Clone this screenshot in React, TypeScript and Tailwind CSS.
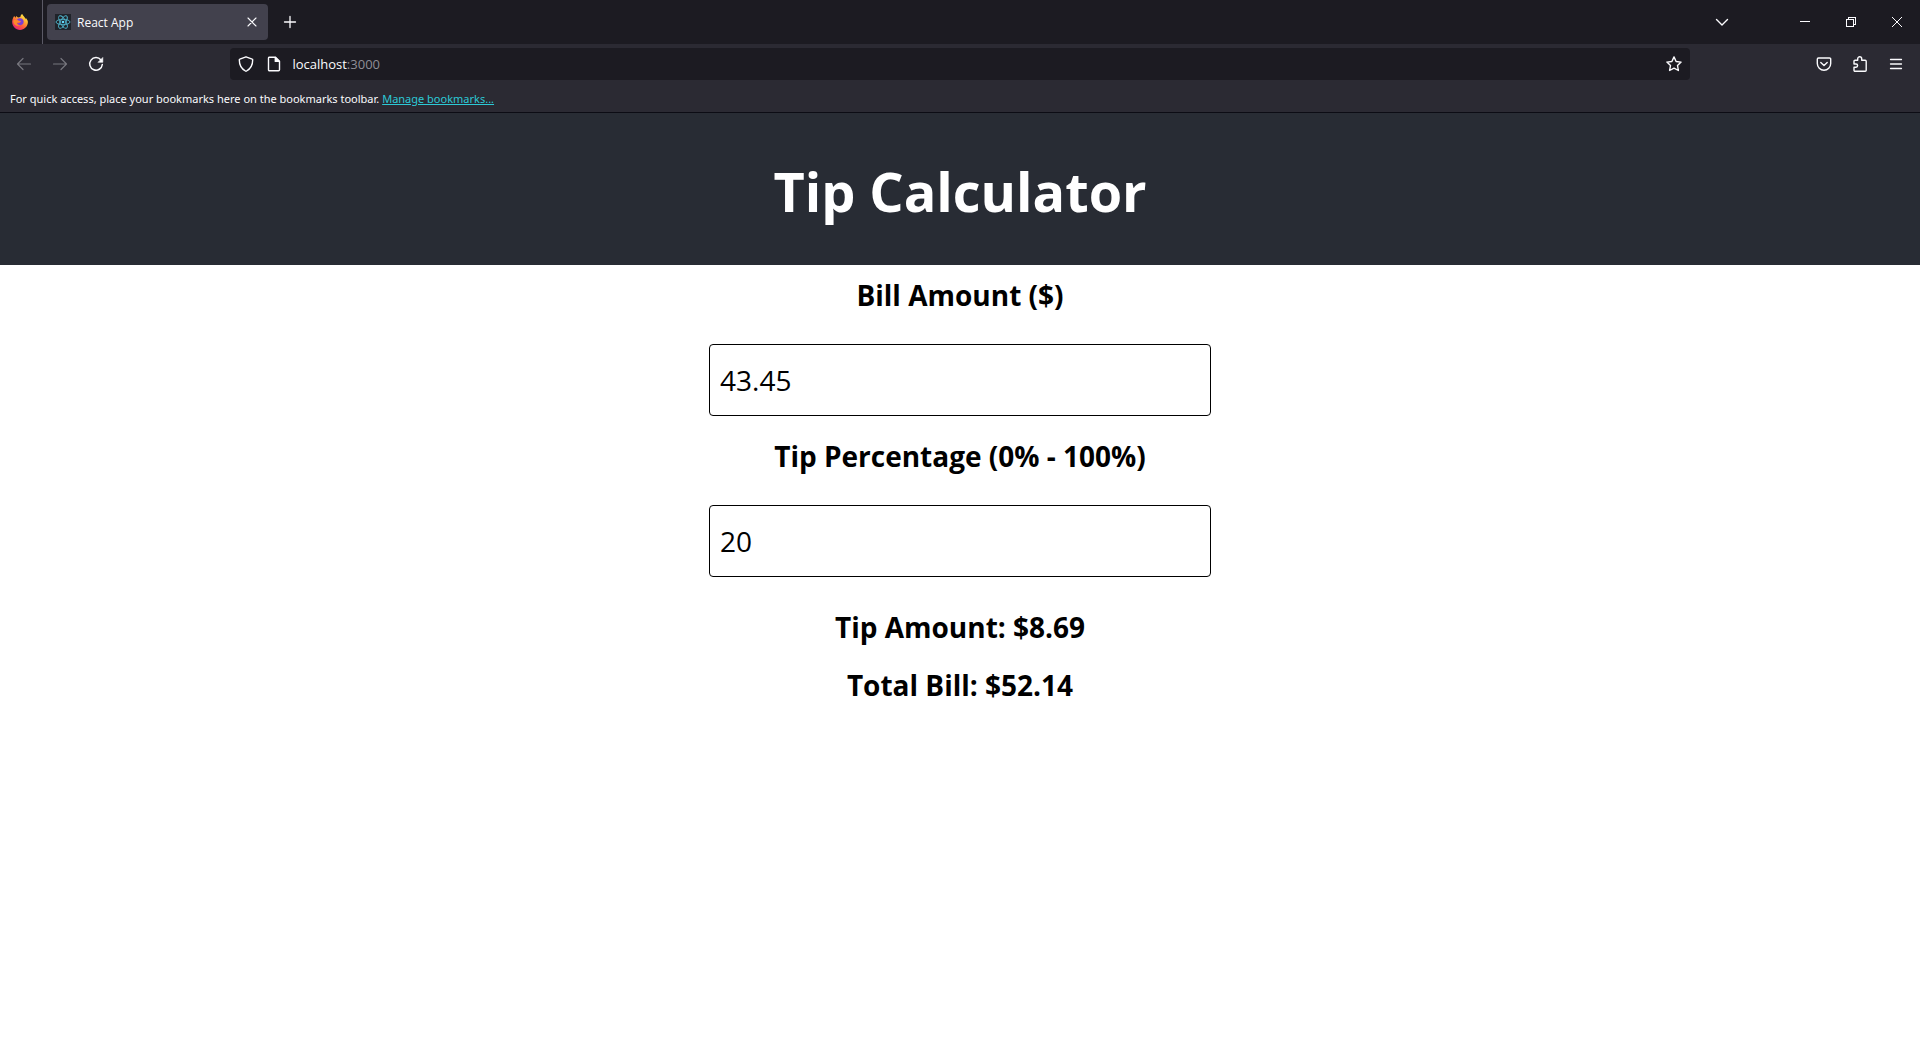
import { useState, type ReactNode } from "react";

function IconButton({ label, className, children, disabled }: { label: string; className: string; children: ReactNode; disabled?: boolean }) {
  return (
    <button type="button" aria-label={label} disabled={disabled} className={`flex shrink-0 items-center justify-center ${className}`}>
      {children}
    </button>
  );
}

function Icon({ children, width = 1.4, className = "size-4" }: { children: ReactNode; width?: number; className?: string }) {
  return (
    <svg viewBox="0 0 16 16" className={className} fill="none" stroke="currentColor" strokeWidth={width} strokeLinecap="round" strokeLinejoin="round" aria-hidden="true">
      {children}
    </svg>
  );
}

function FirefoxLogo() {
  return (
    <svg viewBox="0 0 16 16" className="size-4" aria-hidden="true">
      <defs>
        <linearGradient id="flame" x1="0.85" y1="0.05" x2="0.2" y2="0.95">
          <stop offset="0" stopColor="#fff44f" />
          <stop offset="0.35" stopColor="#ffa930" />
          <stop offset="0.65" stopColor="#ff5a3c" />
          <stop offset="1" stopColor="#e8207c" />
        </linearGradient>
      </defs>
      <path d="M15.3 6.1c-.4-.9-1-1.600-1.700-2 .3.600.5 1.200.5 1.500C13 3 10.900 2 10.200 0 9 .7 8.500 1.900 8.400 2.900c-.8.100-1.500.3-2.100.6C5.500 3.200 5 2.800 4.700 1.900 4 2.300 3.600 3 3.500 3.700 2.900 3.300 2.500 2.600 2.300 2.100 1.100 3.300.4 5.500.2 7.400c-.4 4.600 3.200 8.500 7.800 8.500 4.300 0 7.900-3.500 7.900-7.900 0-.7-.2-1.300-.6-1.900z" fill="url(#flame)" />
      <path d="M5 5.200c1.200-1 3-1.200 4.500-.6 1.800.8 2.700 2.900 1.900 4.700-.7 1.500-2.500 2.200-4.200 1.700-1.200-.4-2-1.200-2.200-2.200 1 .7 2.200.4 2.900-.2.600-.5 1-.8.900-1.200-.2-.5-1.300-.4-1.900-.6-.7-.2-1.500-.8-1.900-1.600z" fill="#7b3fd4" />
      <path d="M1.500 6.300c1-.5 2.300-.4 3.200 0 .8.400 1.500.8 2.600 1-.2.900-1.700 1-2.300 1.600.2 1.500 1.700 2.400 3.200 2.300-2.200 1.200-5.300.4-6.300-1.800-.5-1-.7-2.100-.4-3.100z" fill="#ff8a2a" />
    </svg>
  );
}

function ReactFavicon() {
  return (
    <svg viewBox="0 0 16 16" className="size-4 shrink-0" aria-hidden="true">
      <rect width="16" height="16" fill="#20232a" />
      <g fill="none" stroke="#4fb4cc" strokeWidth="0.9">
        <ellipse cx="8" cy="8" rx="7" ry="2.700" />
        <ellipse cx="8" cy="8" rx="7" ry="2.700" transform="rotate(60 8 8)" />
        <ellipse cx="8" cy="8" rx="7" ry="2.700" transform="rotate(120 8 8)" />
      </g>
      <circle cx="8" cy="8" r="1.300" fill="#61dafb" />
    </svg>
  );
}

function TabStrip() {
  return (
    <div className="flex h-11 items-center bg-[#1c1b22]">
      <div className="flex h-11 w-[43px] shrink-0 items-center border-r border-[#5b5a66] pl-3">
        <FirefoxLogo />
      </div>
      <div className="ml-1 flex h-9 w-[221px] items-center rounded bg-[#42414d] pr-2 pl-2">
        <ReactFavicon />
        <span className="ml-1.5 flex-1 pt-0.5 text-xs">React App</span>
        <IconButton label="Close tab" className="size-4">
          <Icon width={1.1}><path d="M4 4l8 8M12 4l-8 8" /></Icon>
        </IconButton>
      </div>
      <IconButton label="New tab" className="ml-1 size-9">
        <Icon width={1.3}><path d="M8 2.500v11M2.500 8h11" /></Icon>
      </IconButton>
      <div className="flex-1" />
      <IconButton label="List all tabs" className="mr-[42px] size-9">
        <Icon><path d="M2.500 5.500L8 11l5.500-5.500" /></Icon>
      </IconButton>
      <IconButton label="Minimize" className="h-11 w-[46px]">
        <svg viewBox="0 0 10 10" className="size-2.5" fill="none" stroke="currentColor" shapeRendering="crispEdges"><path d="M0 4.500h10" /></svg>
      </IconButton>
      <IconButton label="Restore" className="h-11 w-[46px]">
        <svg viewBox="0 0 10 10" className="size-2.5" fill="none" stroke="currentColor" shapeRendering="crispEdges"><path d="M.5 2.500h7v7h-7zM2.500 2.500v-2h7v7h-2" /></svg>
      </IconButton>
      <IconButton label="Close window" className="h-11 w-[46px]">
        <svg viewBox="0 0 10 10" className="size-2.5" fill="none" stroke="currentColor"><path d="M0 0l10 10M10 0L0 10" /></svg>
      </IconButton>
    </div>
  );
}

function NavigationBar() {
  return (
    <div className="flex h-10 items-center px-1.5">
      <IconButton label="Back" className="size-9 text-[#77767e]" disabled>
        <Icon width={1.2}><path d="M14.500 8h-13M7 2.500L1.500 8 7 13.500" /></Icon>
      </IconButton>
      <IconButton label="Forward" className="size-9 text-[#77767e]" disabled>
        <Icon width={1.2}><path d="M1.500 8h13M9 2.500L14.500 8 9 13.500" /></Icon>
      </IconButton>
      <IconButton label="Reload" className="size-9">
        <Icon width={1.500}>
          <path d="M13 4A6.300 6.300 0 1 0 14.300 8.500" />
          <path d="M14.800 1.800v4.500h-4.500z" fill="currentColor" strokeWidth="0.6" />
        </Icon>
      </IconButton>
      <div className="flex-1" />
      <div className="flex h-8 flex-[12.4] items-center rounded bg-[#1c1b22] px-2">
        <IconButton label="Tracking protection" className="size-4">
          <Icon><path d="M8 .8l6.200 2.400c.300 0 .500.300.500.600 0 5.200-1.900 8.900-6.100 11.200a1.200 1.200 0 0 1-1.200 0C3.200 12.700 1.300 9 1.300 3.800c0-.3.200-.6.500-.6z" /></Icon>
        </IconButton>
        <IconButton label="Site information" className="ml-3 size-4">
          <Icon>
            <path d="M3.200 1.200h6.300l4 4v8.600a1 1 0 0 1-1 1H3.500a1 1 0 0 1-1-1V2.200a1 1 0 0 1 .7-1z" />
            <path d="M9.300 1.500v3.900h4z" fill="currentColor" />
          </Icon>
        </IconButton>
        <p className="ml-2.5 flex-1 pt-0.5 text-[13px]">localhost<span className="text-[#8f8e96]">:3000</span></p>
        <IconButton label="Bookmark this page" className="size-4">
          <Icon><path d="M8 .9l2.100 4.600 5 .6-3.600 3.400.9 5-4.400-2.400-4.400 2.400.9-5L.9 6.100l5-.6z" /></Icon>
        </IconButton>
      </div>
      <div className="flex-1" />
      <IconButton label="Save to Pocket" className="size-9">
        <Icon>
          <path d="M2.500 2h11a1.200 1.200 0 0 1 1.200 1.200V7.500a6.700 6.700 0 0 1-13.400 0V3.200A1.200 1.200 0 0 1 2.500 2z" />
          <path d="M4.800 6.500L8 9.500l3.200-3" />
        </Icon>
      </IconButton>
      <IconButton label="Extensions" className="size-9">
        <Icon><path d="M5.700 4.200V2.800a2 2 0 0 1 4 0v1.400h3.500a1 1 0 0 1 1 1v9a1 1 0 0 1-1 1H3a1 1 0 0 1-1-1v-3h2a1.600 1.600 0 0 0 0-3.200H2v-2.800a1 1 0 0 1 1-1z" /></Icon>
      </IconButton>
      <IconButton label="Open application menu" className="size-9">
        <Icon width={1.300}><path d="M2.500 3.500h11M2.500 8h11M2.500 12.500h11" /></Icon>
      </IconButton>
    </div>
  );
}

function BookmarksBar() {
  return (
    <p className="h-7 px-2.5 pt-[7px] font-['Noto_Sans',sans-serif] text-[11px] leading-4">
      For quick access, place your bookmarks here on the bookmarks toolbar.{" "}
      <a href="#bookmarks" className="text-[#2cc9d6] underline">Manage bookmarks...</a>
    </p>
  );
}

function AmountField({ id, label, value, onChange }: { id: string; label: string; value: string; onChange: (value: string) => void }) {
  return (
    <div className="flex w-full flex-col items-center pt-2.5">
      <label htmlFor={id} className="text-[28px] leading-10 font-bold">{label}</label>
      <input
        id={id}
        type="text"
        inputMode="decimal"
        value={value}
        onChange={(event) => onChange(event.target.value)}
        className="mt-[29px] mb-2.5 h-[72px] w-full rounded border border-black px-2.5 text-[28px]"
      />
    </div>
  );
}

export default function App() {
  const [bill, setBill] = useState("43.45");
  const [percentage, setPercentage] = useState("20");
  const amount = Number(bill) || 0;
  const tip = (amount * (Number(percentage) || 0)) / 100;

  return (
    <div className="min-h-screen bg-white font-['Open_Sans','Noto_Sans',sans-serif]">
      <div className="border-b border-[#0c0c14] bg-[#2b2a33] text-[#fbfbfe]">
        <TabStrip />
        <NavigationBar />
        <BookmarksBar />
      </div>
      <header className="bg-[#282c34] pt-10 pb-9 text-center text-white">
        <h1 className="text-[54px] leading-[76px] font-bold">Tip Calculator</h1>
      </header>
      <main className="mx-auto flex max-w-[502px] flex-col items-center text-black">
        <AmountField id="bill" label="Bill Amount ($)" value={bill} onChange={setBill} />
        <AmountField id="percentage" label="Tip Percentage (0% - 100%)" value={percentage} onChange={setPercentage} />
        <div className="mt-5 text-center text-[28px] leading-10 font-bold">
          <p>Tip Amount: ${tip.toFixed(2)}</p>
          <p className="mt-[18px]">Total Bill: ${(amount + tip).toFixed(2)}</p>
        </div>
      </main>
    </div>
  );
}
